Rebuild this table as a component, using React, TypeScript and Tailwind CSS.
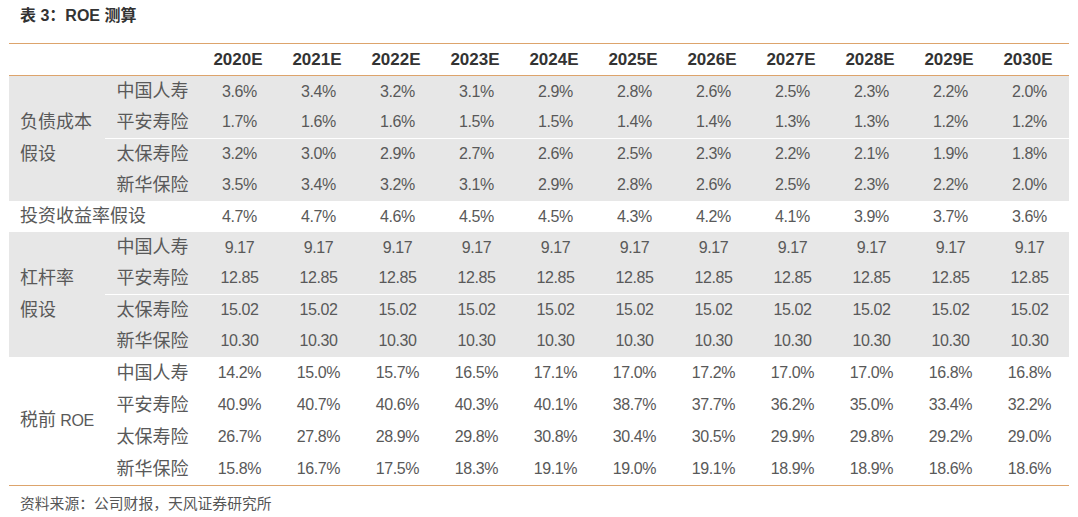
import React from 'react';

const years = ['2020E', '2021E', '2022E', '2023E', '2024E', '2025E', '2026E', '2027E', '2028E', '2029E', '2030E'];

type Row = { name: string; values: string[] };
type Group = { label: React.ReactNode; rowH: string; gray: boolean; rows: Row[] };

const pct = (s: string) => s.split(' ').map(v => v + '%');
const same = (v: string) => Array(11).fill(v);

const groups: Group[] = [
  {
    label: <>负债成本<br />假设</>,
    rowH: 'h-[31.25px]',
    gray: true,
    rows: [
      { name: '中国人寿', values: pct('3.6 3.4 3.2 3.1 2.9 2.8 2.6 2.5 2.3 2.2 2.0') },
      { name: '平安寿险', values: pct('1.7 1.6 1.6 1.5 1.5 1.4 1.4 1.3 1.3 1.2 1.2') },
      { name: '太保寿险', values: pct('3.2 3.0 2.9 2.7 2.6 2.5 2.3 2.2 2.1 1.9 1.8') },
      { name: '新华保险', values: pct('3.5 3.4 3.2 3.1 2.9 2.8 2.6 2.5 2.3 2.2 2.0') },
    ],
  },
  {
    label: <>杠杆率<br />假设</>,
    rowH: 'h-[31.25px]',
    gray: true,
    rows: [
      { name: '中国人寿', values: same('9.17') },
      { name: '平安寿险', values: same('12.85') },
      { name: '太保寿险', values: same('15.02') },
      { name: '新华保险', values: same('10.30') },
    ],
  },
  {
    label: <>税前<span className="text-[16px] tracking-[-0.3px]"> ROE</span></>,
    rowH: 'h-[32px]',
    gray: false,
    rows: [
      { name: '中国人寿', values: pct('14.2 15.0 15.7 16.5 17.1 17.0 17.2 17.0 17.0 16.8 16.8') },
      { name: '平安寿险', values: pct('40.9 40.7 40.6 40.3 40.1 38.7 37.7 36.2 35.0 33.4 32.2') },
      { name: '太保寿险', values: pct('26.7 27.8 28.9 29.8 30.8 30.4 30.5 29.9 29.8 29.2 29.0') },
      { name: '新华保险', values: pct('15.8 16.7 17.5 18.3 19.1 19.0 19.1 18.9 18.9 18.6 18.6') },
    ],
  },
];

const invest = pct('4.7 4.7 4.6 4.5 4.5 4.3 4.2 4.1 3.9 3.7 3.6');

// number cell
function Num({ v }: { v: string }) {
  return <div className="text-center text-[16px] tracking-[-0.4px]">{v}</div>;
}

function GroupBlock({ g }: { g: Group }) {
  return (
    <div className={`flex ${g.gray ? 'bg-[#e7e7e7]' : ''}`}>
      <div className="w-[96px] shrink-0 flex items-center pl-[11px] text-[18px] leading-[31.5px]">
        <div>{g.label}</div>
      </div>
      <div className="flex-1">
        {g.rows.map((r, i) => (
          <div
            key={r.name}
            className={`grid grid-cols-[95px_repeat(11,minmax(0,1fr))] items-center ${g.rowH} ${g.gray && i === 1 ? 'border-b border-white' : ''}`}
          >
            <div className="text-center text-[18px]">{r.name}</div>
            {r.values.map((v, j) => <Num key={j} v={v} />)}
          </div>
        ))}
      </div>
    </div>
  );
}

export default function App() {
  return (
    <div className="w-[1078px] h-[517px] bg-white font-['Liberation_Sans','Noto_Sans_CJK_SC',sans-serif] text-[#595959]">
      <div className="h-[43px] pl-[20px] pt-[6px] text-[16px] leading-[20px] font-bold text-[#333]">
        表 3：ROE 测算
      </div>
      <div className="ml-[9px] w-[1060px]">
        <div className="grid grid-cols-[191px_repeat(11,minmax(0,1fr))] items-center h-[33px] border-y border-[#dda46c] font-bold text-[17px] text-[#333]">
          <div />
          {years.map(y => (
            <div key={y} className="text-center pr-[3px]">{y}</div>
          ))}
        </div>
        <GroupBlock g={groups[0]} />
        <div className="grid grid-cols-[191px_repeat(11,minmax(0,1fr))] items-center h-[31px]">
          <div className="pl-[11px] text-[18px]">投资收益率假设</div>
          {invest.map((v, j) => <Num key={j} v={v} />)}
        </div>
        <GroupBlock g={groups[1]} />
        <div className="border-b border-[#dda46c]">
          <GroupBlock g={groups[2]} />
        </div>
      </div>
      <div className="pl-[20px] pt-[8px] text-[14.8px] leading-[20px] text-[#555]">
        资料来源：公司财报，天风证券研究所
      </div>
    </div>
  );
}
